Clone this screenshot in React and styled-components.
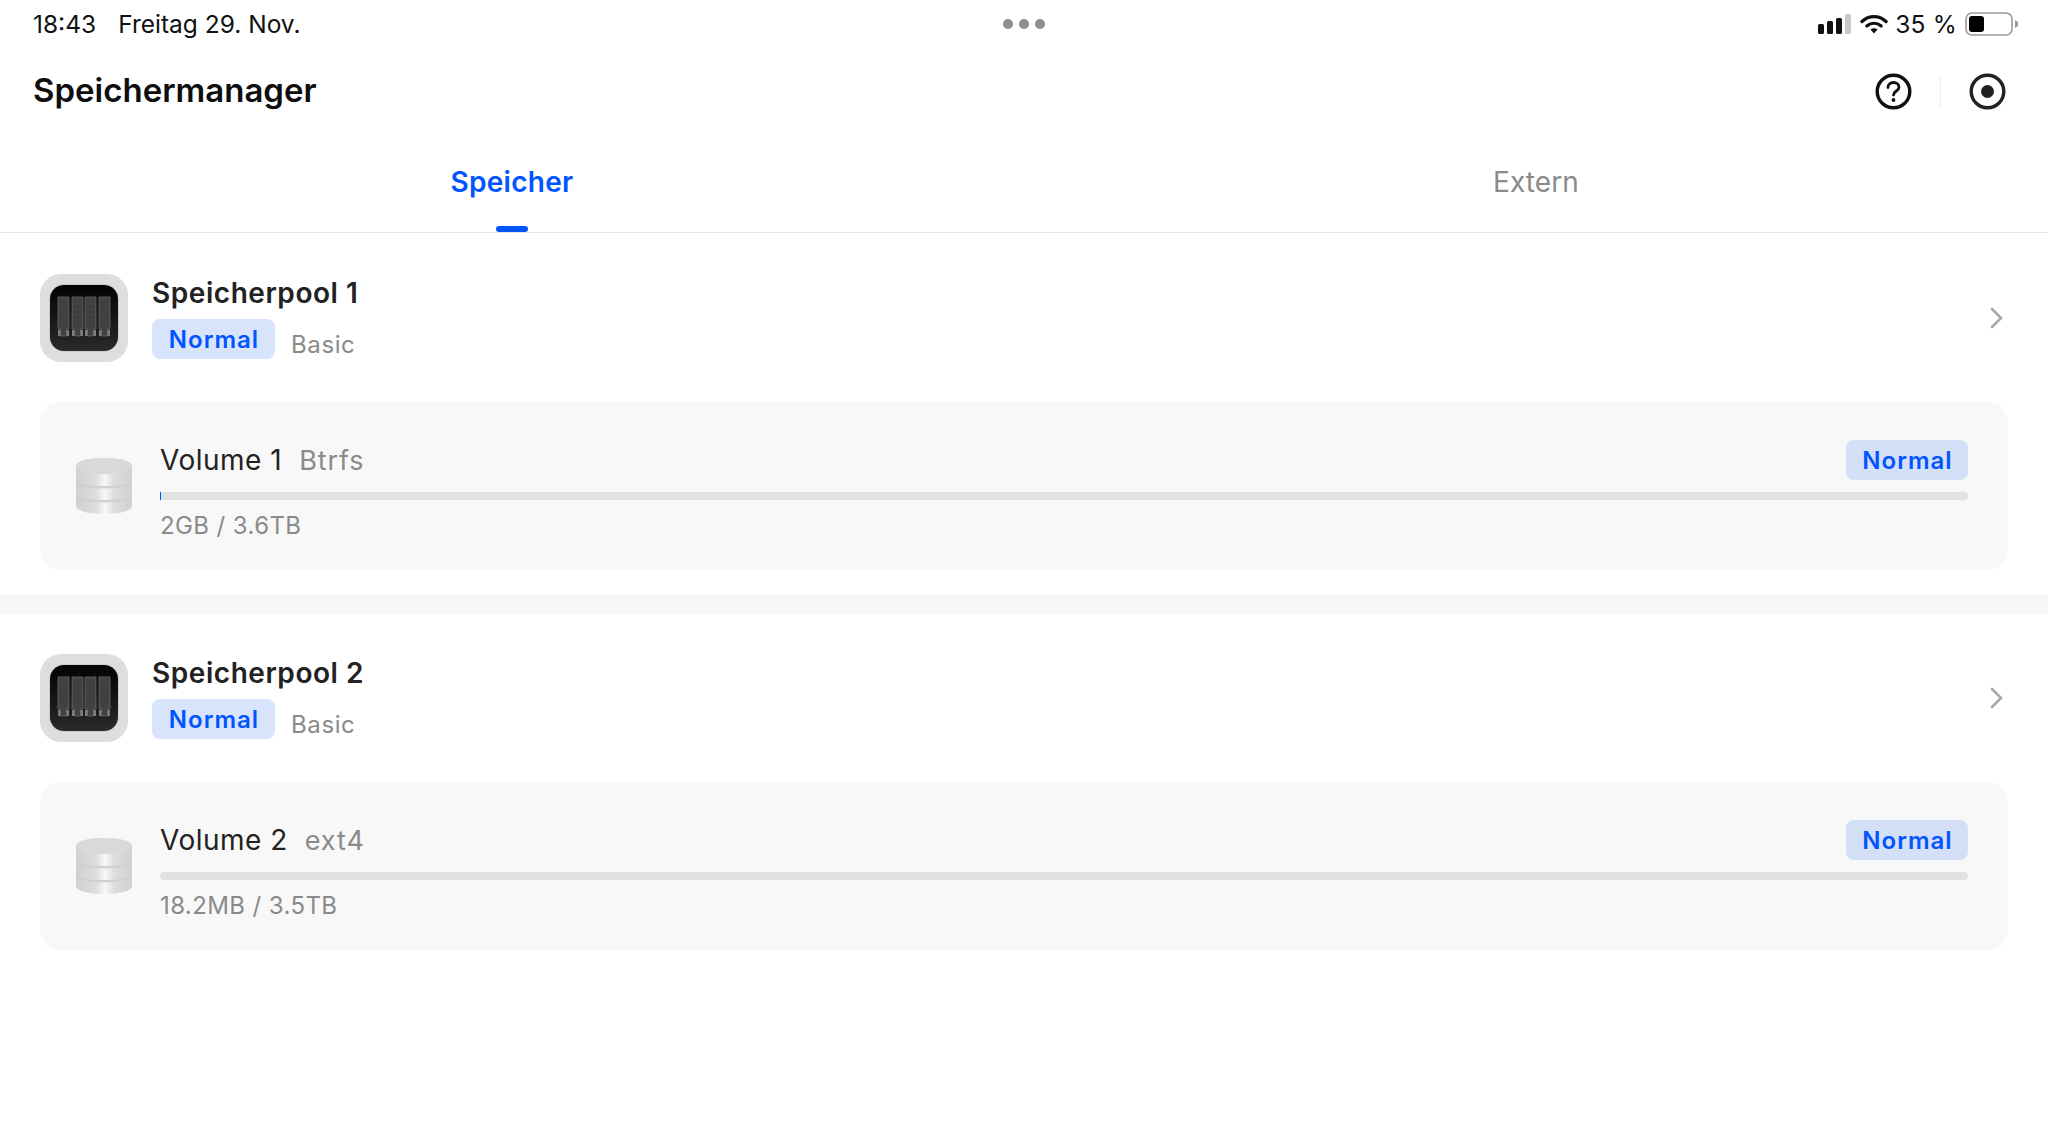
import React from 'react';
import styled, { createGlobalStyle } from 'styled-components';

const GlobalStyle = createGlobalStyle`
  html, body {
    margin: 0;
    padding: 0;
    background: #fff;
    font-family: Inter, "Liberation Sans", sans-serif;
  }
  * { box-sizing: border-box; }
`;

const Page = styled.div`
  width: 2048px;
  height: 1146px;
  overflow: hidden;
  background: #fff;
`;

const StatusBar = styled.div`
  height: 48px;
  padding: 0 29px;
  display: grid;
  grid-template-columns: 1fr auto 1fr;
  align-items: center;
  color: #111;
  font-size: 24.5px;
`;

const StatusLeft = styled.div`
  display: flex;
  gap: 22px;
  padding-left: 4px;
`;

const Dots = styled.div`
  display: flex;
  gap: 6px;
`;

const Dot = styled.span`
  width: 10px;
  height: 10px;
  border-radius: 50%;
  background: #8e8e8e;
`;

const StatusRight = styled.div`
  display: flex;
  justify-content: flex-end;
  align-items: center;
`;

const Percent = styled.span`
  margin: 0 8px 0 7px;
  letter-spacing: 0.2px;
`;

const Header = styled.div`
  height: 84px;
  padding: 0 42px 0 33px;
  display: flex;
  align-items: center;
  justify-content: space-between;
`;

const Title = styled.h1`
  margin: 0;
  font-size: 33px;
  font-weight: 600;
  color: #0e0e0e;
`;

const HeaderActions = styled.div`
  display: flex;
  align-items: center;
  margin-top: 3px;
`;

const Divider = styled.span`
  width: 1px;
  height: 32px;
  margin: 0 28px;
  background: #ececec;
`;

const Tabs = styled.div`
  height: 101px;
  display: grid;
  grid-template-columns: 1fr 1fr;
  border-bottom: 1px solid #e6e6e6;
`;

const Tab = styled.div`
  position: relative;
  padding-top: 33px;
  text-align: center;
  font-size: 28px;
  line-height: 34px;
  font-weight: ${(p) => (p.$active ? 600 : 400)};
  color: ${(p) => (p.$active ? '#0055ff' : '#8a8a8a')};
  letter-spacing: ${(p) => (p.$active ? 0.3 : 0.1)}px;
`;

const TabMark = styled.span`
  position: absolute;
  left: 50%;
  bottom: 0;
  width: 32px;
  height: 6px;
  margin-left: -16px;
  border-radius: 3px;
  background: #0055ff;
`;

const Section = styled.section`
  padding: 41px 40px 25px;
  & + & {
    border-top: 19px solid #f7f7f7;
    padding-top: 40px;
  }
`;

const Pool = styled.div`
  display: flex;
  align-items: center;
  gap: 24px;
  height: 88px;
  margin-bottom: 40px;
`;

const PoolText = styled.div`
  flex: 1;
  display: flex;
  flex-direction: column;
  gap: 8px;
`;

const PoolName = styled.div`
  font-size: 28px;
  line-height: 36px;
  font-weight: 600;
  color: #222;
  margin-top: -2px;
  letter-spacing: 0.55px;
`;

const PoolMeta = styled.div`
  display: flex;
  align-items: center;
  gap: 16px;
`;

const Badge = styled.span`
  display: inline-flex;
  align-items: center;
  justify-content: center;
  width: ${(p) => (p.$onCard ? 122 : 123)}px;
  height: 40px;
  padding-left: 1px;
  border-radius: 8px;
  background: ${(p) => (p.$onCard ? '#d4dff8' : '#d8e4fc')};
  color: #0055ff;
  font-size: 24px;
  font-weight: 600;
  letter-spacing: 1px;
`;

const Muted = styled.span`
  padding-top: 10px;
  font-size: 24px;
  color: #8a8a8a;
  letter-spacing: 0.6px;
`;

const Chevron = styled.svg`
  margin-right: 5px;
  flex: none;
`;

const VolumeCard = styled.div`
  height: 168px;
  padding: 0 40px 0 36px;
  display: flex;
  align-items: center;
  gap: 28px;
  border-radius: 20px;
  background: #f8f8f8;
`;

const VolumeBody = styled.div`
  flex: 1;
  display: flex;
  flex-direction: column;
  padding-top: 8px;
`;

const VolumeTop = styled.div`
  height: 40px;
  display: flex;
  align-items: center;
  justify-content: space-between;
`;

const VolumeName = styled.div`
  display: flex;
  align-items: baseline;
  gap: 17px;
  font-size: 28px;
  color: #222;
  letter-spacing: 0.5px;
`;

const VolumeType = styled.span`
  font-size: 27px;
  color: #8a8a8a;
  letter-spacing: 0.9px;
`;

const Track = styled.div`
  height: 8px;
  margin-top: 12px;
  border-radius: 4px;
  background: #e2e2e2;
`;

const Fill = styled.div`
  height: 100%;
  background: #0055ff;
`;

const Usage = styled.div`
  margin-top: 12px;
  font-size: 24px;
  line-height: 28px;
  color: #8a8a8a;
  letter-spacing: 0.4px;
`;

function SignalIcon() {
  return (
    <svg width="33" height="20" viewBox="0 0 33 20">
      <rect x="0" y="10" width="6" height="10" rx="1.5" fill="#111" />
      <rect x="9" y="7" width="6" height="13" rx="1.5" fill="#111" />
      <rect x="18" y="4" width="6" height="16" rx="1.5" fill="#111" />
      <rect x="27" y="0" width="6" height="20" rx="1" fill="#c9c9c9" />
    </svg>
  );
}

function WifiIcon() {
  return (
    <svg width="28" height="20" viewBox="0 0 28 20" style={{ marginLeft: 9 }}>
      <path d="M2 7.5 C9 1 19 1 26 7.5" fill="none" stroke="#111" strokeWidth="3.4" strokeLinecap="round" />
      <path d="M6.8 12 C11 8.3 17 8.3 21.2 12" fill="none" stroke="#111" strokeWidth="3.2" strokeLinecap="round" />
      <path d="M10.5 15.5 L14 19.5 L17.5 15.5 C15.5 13.8 12.5 13.8 10.5 15.5 Z" fill="#111" />
    </svg>
  );
}

function BatteryIcon() {
  return (
    <svg width="54" height="24" viewBox="0 0 54 24">
      <rect x="1" y="1" width="46" height="22" rx="6" fill="none" stroke="#9a9a9a" strokeWidth="1.6" />
      <rect x="4" y="4" width="15" height="16" rx="3" fill="#000" />
      <path d="M50 8 L53 10 V14 L50 16 Z" fill="#9a9a9a" />
    </svg>
  );
}

function HelpIcon() {
  return (
    <svg width="37" height="37" viewBox="0 0 37 37" fill="none">
      <circle cx="18.5" cy="18.5" r="16.3" stroke="#111" strokeWidth="3.4" />
      <path d="M13 14.5 C13 11.3 15.4 9.5 18.5 9.5 C21.6 9.5 24 11.4 24 14.2 C24 18 18.5 18 18.5 22" stroke="#111" strokeWidth="2.8" strokeLinecap="round" />
      <circle cx="18.5" cy="27" r="1.9" fill="#111" />
    </svg>
  );
}

function RecordIcon() {
  return (
    <svg width="37" height="37" viewBox="0 0 37 37" fill="none">
      <circle cx="18.5" cy="18.5" r="16.3" stroke="#222" strokeWidth="3.4" />
      <circle cx="18.5" cy="18.5" r="6.5" fill="#222" />
    </svg>
  );
}

function PoolIcon({ id }) {
  return (
    <svg width="88" height="88" viewBox="0 0 88 88" style={{ flex: 'none' }}>
      <defs>
        <linearGradient id={`pool-${id}`} x1="0" y1="0" x2="0" y2="1">
          <stop offset="0" stopColor="#030303" />
          <stop offset="0.5" stopColor="#161616" />
          <stop offset="1" stopColor="#2a2a2a" />
        </linearGradient>
      </defs>
      <rect width="88" height="88" rx="21" fill="#dfdde0" />
      <rect x="9" y="10" width="70" height="68" rx="15" fill="#cfcdd0" />
      <rect x="10" y="11" width="68" height="66" rx="14" fill={`url(#pool-${id})`} />
      {[18, 32, 45, 59].map((x) => (
        <g key={x}>
          <path
            d={`M${x} 23 h11 v32 h-2.5 v7 h-6 v-7 h-2.5 Z`}
            fill="#424242"
            stroke="#686868"
            strokeWidth="0.8"
          />
          {[28, 33, 38, 43, 48].map((y) => (
            <line key={y} x1={x + 1} x2={x + 10} y1={y} y2={y} stroke="#393939" strokeWidth="0.5" />
          ))}
          <path d={`M${x} 56 h2.5 v6 h-2.5 Z M${x + 8.5} 56 h2.5 v6 h-2.5 Z`} fill="#7c7c7c" />
        </g>
      ))}
    </svg>
  );
}

function DrumIcon({ id }) {
  const grad = `drum-${id}`;
  return (
    <svg width="56" height="56" viewBox="0 0 56 56" style={{ flex: 'none' }}>
      <defs>
        <linearGradient id={grad} x1="0" y1="0" x2="1" y2="0">
          <stop offset="0" stopColor="#d0d1d3" />
          <stop offset="0.36" stopColor="#dddddf" />
          <stop offset="0.52" stopColor="#f8f8f8" />
          <stop offset="0.68" stopColor="#dddddf" />
          <stop offset="1" stopColor="#d0d1d3" />
        </linearGradient>
      </defs>
      <path d="M0 8 C0 3 13 0 28 0 C43 0 56 3 56 8 V48 C56 53 43 56 28 56 C13 56 0 53 0 48 Z" fill={`url(#${grad})`} />
      <ellipse cx="28" cy="8" rx="28" ry="8" fill="#d8d9db" />
      <path d="M0 24 C8 31 48 31 56 24" fill="none" stroke="#cfd0d2" strokeWidth="2.4" />
      <path d="M0 38 C8 45 48 45 56 38" fill="none" stroke="#cfd0d2" strokeWidth="2.4" />
    </svg>
  );
}

const POOLS = [
  { id: 1, name: 'Speicherpool 1', volume: 'Volume 1', type: 'Btrfs', usage: '2GB / 3.6TB', fill: 0.06 },
  { id: 2, name: 'Speicherpool 2', volume: 'Volume 2', type: 'ext4', usage: '18.2MB / 3.5TB', fill: 0 },
];

export default function App() {
  return (
    <Page>
      <GlobalStyle />
      <StatusBar>
        <StatusLeft>
          <span>18:43</span>
          <span>Freitag 29. Nov.</span>
        </StatusLeft>
        <Dots>
          <Dot />
          <Dot />
          <Dot />
        </Dots>
        <StatusRight>
          <SignalIcon />
          <WifiIcon />
          <Percent>35 %</Percent>
          <BatteryIcon />
        </StatusRight>
      </StatusBar>
      <Header>
        <Title>Speichermanager</Title>
        <HeaderActions>
          <HelpIcon />
          <Divider />
          <RecordIcon />
        </HeaderActions>
      </Header>
      <Tabs>
        <Tab $active>
          Speicher
          <TabMark />
        </Tab>
        <Tab>Extern</Tab>
      </Tabs>
      {POOLS.map((pool) => (
        <Section key={pool.id}>
          <Pool>
            <PoolIcon id={pool.id} />
            <PoolText>
              <PoolName>{pool.name}</PoolName>
              <PoolMeta>
                <Badge>Normal</Badge>
                <Muted>Basic</Muted>
              </PoolMeta>
            </PoolText>
            <Chevron width="13" height="22" viewBox="0 0 13 22" fill="none">
              <path d="M2 2 L11 11 L2 20" stroke="#a8a8a8" strokeWidth="2.6" strokeLinecap="round" strokeLinejoin="round" />
            </Chevron>
          </Pool>
          <VolumeCard>
            <DrumIcon id={pool.id} />
            <VolumeBody>
              <VolumeTop>
                <VolumeName>
                  {pool.volume}
                  <VolumeType>{pool.type}</VolumeType>
                </VolumeName>
                <Badge $onCard>Normal</Badge>
              </VolumeTop>
              <Track>
                <Fill style={{ width: `${pool.fill}%` }} />
              </Track>
              <Usage>{pool.usage}</Usage>
            </VolumeBody>
          </VolumeCard>
        </Section>
      ))}
    </Page>
  );
}
